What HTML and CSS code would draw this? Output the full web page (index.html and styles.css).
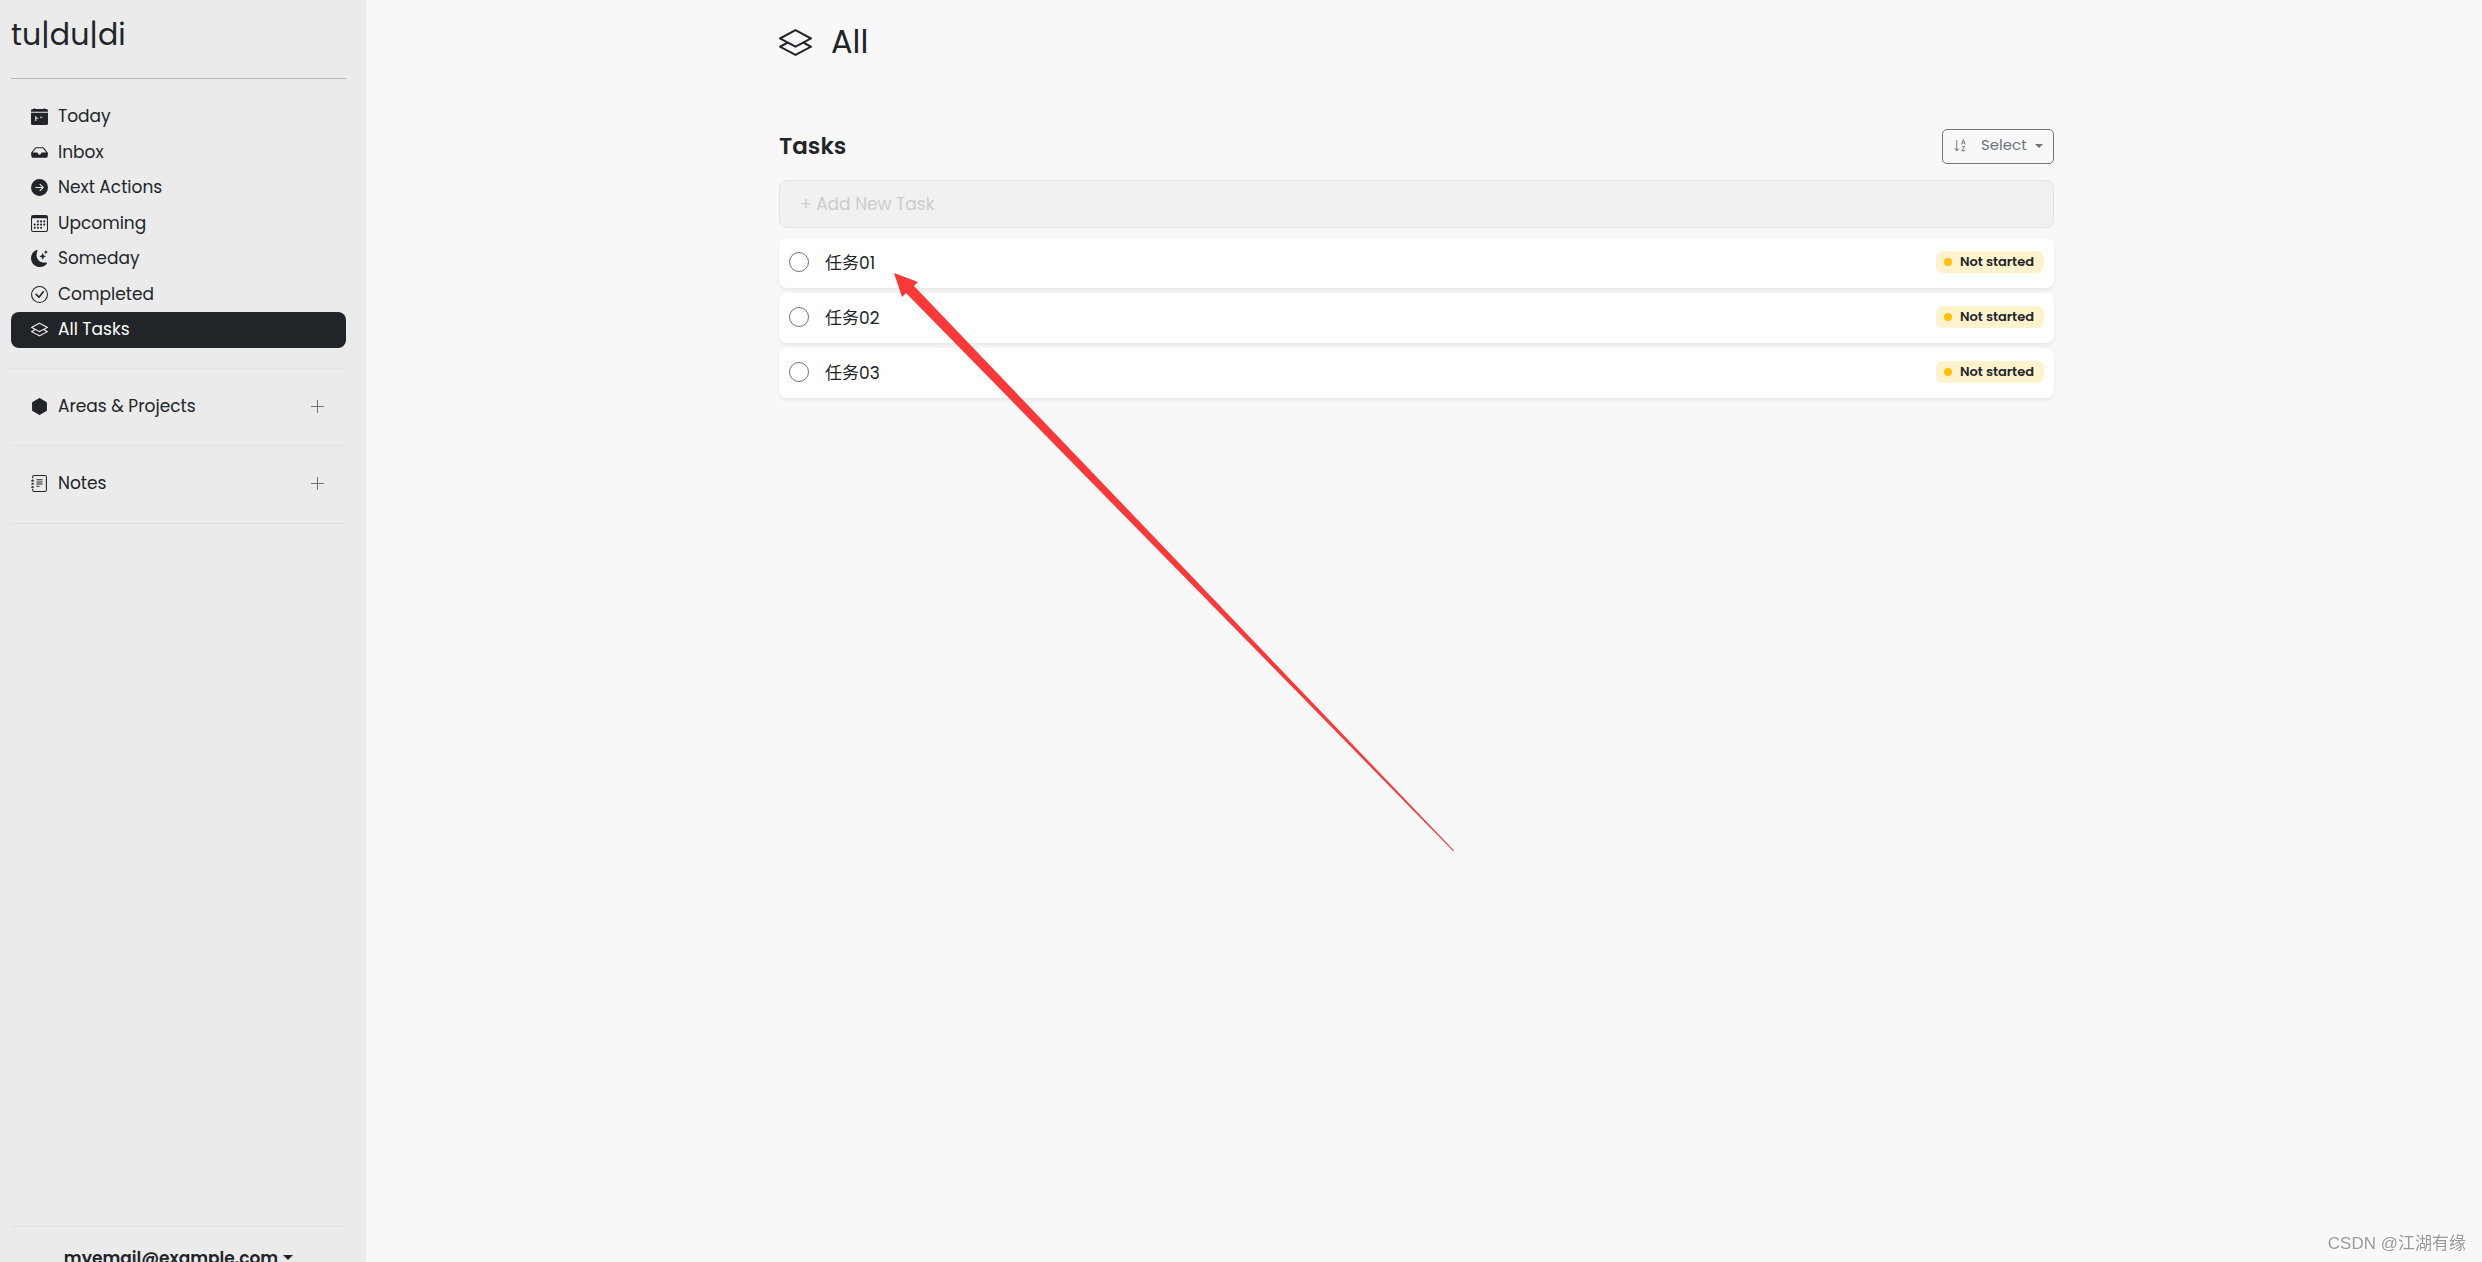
FILE: index.html
```html
<!DOCTYPE html>
<html lang="en">
<head>
    <meta charset="UTF-8">
    <meta name="viewport" content="width=device-width, initial-scale=1.0">
    <title>tu|du|di</title>
    <link rel="stylesheet" href="styles.css">
</head>
<body>

    <!-- shared icons -->
    <svg class="sprite" aria-hidden="true">
        <symbol id="layers" viewBox="0 0 16 16">
            <path d="M8.235 1.559a.5.5 0 0 0-.47 0l-7.5 4a.5.5 0 0 0 0 .882L3.188 8 .264 9.559a.5.5 0 0 0 0 .882l7.5 4a.5.5 0 0 0 .47 0l7.5-4a.5.5 0 0 0 0-.882L12.813 8l2.922-1.559a.5.5 0 0 0 0-.882zm3.515 7.008L14.438 10 8 13.433 1.562 10 4.25 8.567l3.515 1.874a.5.5 0 0 0 .47 0zM8 9.433 1.562 6 8 2.567 14.438 6z"/>
        </symbol>
        <symbol id="plus" viewBox="0 0 13 13">
            <path d="M6 0h1v6h6v1H7v6H6V7H0V6h6z"/>
        </symbol>
    </svg>

    <div class="app">
        <aside class="sidebar">
            <a class="logo" href="#">tu|du|di</a>

            <nav class="menu">
                <a class="menu-item" href="#">
                    <svg class="icon" viewBox="0 0 16 16"><path fill-rule="evenodd" d="M4 .5a.5.5 0 0 0-1 0V1H1.500a1.500 1.500 0 0 0-1.500 1.500V3.500h16V2.500A1.500 1.500 0 0 0 14.500 1H13V.5a.5.5 0 0 0-1 0V1H4zM0 4.500V14.500A1.500 1.500 0 0 0 1.500 16h13a1.500 1.500 0 0 0 1.500-1.500V4.500zM4 7.500h1v1.700h1.800v1H5v2H4zM8.600 8.200h2v1h-2z"/></svg>
                    Today
                </a>
                <a class="menu-item" href="#">
                    <svg class="icon" viewBox="0 0 16 16"><path d="M4.980 4a.5.5 0 0 0-.39.188L1.540 8H6a.5.5 0 0 1 .5.5 1.500 1.500 0 1 0 3 0A.5.5 0 0 1 10 8h4.460l-3.050-3.812A.5.5 0 0 0 11.020 4zm-1.170-.437A1.500 1.500 0 0 1 4.980 3h6.040a1.500 1.500 0 0 1 1.170.563l3.700 4.625a.5.5 0 0 1 .106.374l-.39 3.124A1.500 1.500 0 0 1 14.117 13H1.883a1.500 1.500 0 0 1-1.489-1.314l-.39-3.124a.5.5 0 0 1 .106-.374z"/></svg>
                    Inbox
                </a>
                <a class="menu-item" href="#">
                    <svg class="icon" viewBox="0 0 16 16"><path d="M8 0a8 8 0 1 1 0 16A8 8 0 0 1 8 0M4.500 7.500a.5.5 0 0 0 0 1h5.793l-2.147 2.146a.5.5 0 0 0 .708.708l3-3a.5.5 0 0 0 0-.708l-3-3a.5.5 0 1 0-.708.708L10.293 7.500z"/></svg>
                    Next Actions
                </a>
                <a class="menu-item" href="#">
                    <svg class="icon" viewBox="0 0 16 16"><path d="M14 0H2a2 2 0 0 0-2 2v12a2 2 0 0 0 2 2h12a2 2 0 0 0 2-2V2a2 2 0 0 0-2-2M1 3.857C1 3.384 1.448 3 2 3h12c.552 0 1 .384 1 .857v10.286c0 .473-.448.857-1 .857H2c-.552 0-1-.384-1-.857z"/><path d="M6.500 7a1 1 0 1 0 0-2 1 1 0 0 0 0 2m3 0a1 1 0 1 0 0-2 1 1 0 0 0 0 2m3 0a1 1 0 1 0 0-2 1 1 0 0 0 0 2m-9 3a1 1 0 1 0 0-2 1 1 0 0 0 0 2m3 0a1 1 0 1 0 0-2 1 1 0 0 0 0 2m3 0a1 1 0 1 0 0-2 1 1 0 0 0 0 2m3 0a1 1 0 1 0 0-2 1 1 0 0 0 0 2m-9 3a1 1 0 1 0 0-2 1 1 0 0 0 0 2m3 0a1 1 0 1 0 0-2 1 1 0 0 0 0 2m3 0a1 1 0 1 0 0-2 1 1 0 0 0 0 2"/></svg>
                    Upcoming
                </a>
                <a class="menu-item" href="#">
                    <svg class="icon" viewBox="0 0 16 16"><path d="M6 .278a.77.77 0 0 1 .08.858 7.200 7.200 0 0 0-.878 3.460c0 4.021 3.278 7.277 7.318 7.277q.792-.001 1.533-.160a.79.79 0 0 1 .810.316.73.73 0 0 1-.031.893A8.350 8.350 0 0 1 8.344 16C3.734 16 0 12.286 0 7.710 0 4.266 2.114 1.312 5.124.060A.75.75 0 0 1 6 .278"/><path d="M10.794 3.148a.217.217 0 0 1 .412 0l.387 1.162c.173.518.579.924 1.097 1.097l1.162.387a.217.217 0 0 1 0 .412l-1.162.387a1.730 1.730 0 0 0-1.097 1.097l-.387 1.162a.217.217 0 0 1-.412 0l-.387-1.162A1.730 1.730 0 0 0 9.310 6.593l-1.162-.387a.217.217 0 0 1 0-.412l1.162-.387a1.730 1.730 0 0 0 1.097-1.097zM13.863.099a.145.145 0 0 1 .274 0l.258.774c.115.346.386.617.732.732l.774.258a.145.145 0 0 1 0 .274l-.774.258a1.160 1.160 0 0 0-.732.732l-.258.774a.145.145 0 0 1-.274 0l-.258-.774a1.160 1.160 0 0 0-.732-.732l-.774-.258a.145.145 0 0 1 0-.274l.774-.258c.346-.115.617-.386.732-.732z"/></svg>
                    Someday
                </a>
                <a class="menu-item" href="#">
                    <svg class="icon" viewBox="0 0 16 16"><path d="M8 15A7 7 0 1 1 8 1a7 7 0 0 1 0 14m0 1A8 8 0 1 0 8 0a8 8 0 0 0 0 16"/><path d="m10.970 4.970-.020.022-3.473 4.425-2.093-2.094a.75.75 0 0 0-1.060 1.060L6.970 11.030a.75.75 0 0 0 1.079-.020l3.992-4.990a.75.75 0 0 0-1.071-1.050"/></svg>
                    Completed
                </a>
                <a class="menu-item active" href="#">
                    <svg class="icon"><use href="#layers"/></svg>
                    All Tasks
                </a>
            </nav>

            <div class="group">
                <a class="menu-item" href="#">
                    <svg class="icon" viewBox="0 0 16 16"><path d="M8.500.134a1 1 0 0 0-1 0l-6 3.577a1 1 0 0 0-.5.866v6.846a1 1 0 0 0 .5.866l6 3.577a1 1 0 0 0 1 0l6-3.577a1 1 0 0 0 .5-.866V4.577a1 1 0 0 0-.5-.866z"/></svg>
                    Areas &amp; Projects
                </a>
                <button class="add" type="button" aria-label="Add area"><svg><use href="#plus"/></svg></button>
            </div>
            <div class="group">
                <a class="menu-item" href="#">
                    <svg class="icon" viewBox="0 0 16 16"><path d="M5 10.500a.5.5 0 0 1 .5-.5h2a.5.5 0 0 1 0 1h-2a.5.5 0 0 1-.5-.5m0-2a.5.5 0 0 1 .5-.5h5a.5.5 0 0 1 0 1h-5a.5.5 0 0 1-.5-.5m0-2a.5.5 0 0 1 .5-.5h5a.5.5 0 0 1 0 1h-5a.5.5 0 0 1-.5-.5m0-2a.5.5 0 0 1 .5-.5h5a.5.5 0 0 1 0 1h-5a.5.5 0 0 1-.5-.5"/><path d="M3 0h10a2 2 0 0 1 2 2v12a2 2 0 0 1-2 2H3a2 2 0 0 1-2-2v-1h1v1a1 1 0 0 0 1 1h10a1 1 0 0 0 1-1V2a1 1 0 0 0-1-1H3a1 1 0 0 0-1 1v1H1V2a2 2 0 0 1 2-2"/><path d="M1 5v-.5a.5.5 0 0 1 1 0V5h.5a.5.5 0 0 1 0 1h-2a.5.5 0 0 1 0-1zm0 3v-.5a.5.5 0 0 1 1 0V8h.5a.5.5 0 0 1 0 1h-2a.5.5 0 0 1 0-1zm0 3v-.5a.5.5 0 0 1 1 0v.5h.5a.5.5 0 0 1 0 1h-2a.5.5 0 0 1 0-1z"/></svg>
                    Notes
                </a>
                <button class="add" type="button" aria-label="Add note"><svg><use href="#plus"/></svg></button>
            </div>

            <div class="account">
                <button class="account-toggle" type="button">myemail@example.com<span class="caret"></span></button>
            </div>
        </aside>

        <main class="content">
            <div class="page">
                <h1 class="page-title"><svg><use href="#layers"/></svg>All</h1>

                <div class="toolbar">
                    <h2>Tasks</h2>
                    <label class="sort">
                        <svg viewBox="0 0 16 16"><path fill-rule="evenodd" d="M10.082 5.629 9.664 7H8.598l1.789-5.332h1.234L13.402 7h-1.120l-.419-1.371zm1.570-.785L11 2.687h-.047l-.652 2.157z"/><path d="M12.960 14H9.028v-.691l2.579-3.720v-.054H9.098v-.867h3.785v.691l-2.567 3.720v.054h2.645zM4.500 2.500a.5.5 0 0 0-1 0v9.793l-1.146-1.147a.5.5 0 0 0-.708.708l2 1.999.007.007a.497.497 0 0 0 .7-.006l2-2a.5.5 0 0 0-.707-.708L4.500 12.293z"/></svg>
                        <select aria-label="Sort tasks">
                            <option>Select</option>
                        </select>
                        <span class="caret"></span>
                    </label>
                </div>

                <input class="new-task" type="text" placeholder="+ Add New Task" aria-label="Add New Task">

                <ul class="tasks">
                    <li class="task">
                        <input type="checkbox" id="task1">
                        <label for="task1">任务01</label>
                        <span class="badge">Not started</span>
                    </li>
                    <li class="task">
                        <input type="checkbox" id="task2">
                        <label for="task2">任务02</label>
                        <span class="badge">Not started</span>
                    </li>
                    <li class="task">
                        <input type="checkbox" id="task3">
                        <label for="task3">任务03</label>
                        <span class="badge">Not started</span>
                    </li>
                </ul>

                <!-- arrow pointing at the first task -->
                <svg class="arrow" viewBox="0 0 560 578" aria-hidden="true">
                    <path d="M0 0 24 9 20 13 560 577.500 559 578 12 20 8 24z"/>
                </svg>
            </div>
        </main>
    </div>

    <div class="watermark">CSDN @江湖有缘</div>

</body>
</html>
```
FILE: styles.css
```css
* {
    box-sizing: border-box;
}

body {
    margin: 0;
    background-color: #f8f8f8;
    color: #212529;
    font-family: Poppins, Inter, "Noto Sans CJK SC", sans-serif;
    font-size: 17px;
    line-height: 1.5;
}

a {
    color: inherit;
    text-decoration: none;
}

svg {
    fill: currentColor;
    flex: none;
}

button, input, select {
    font: inherit;
    color: inherit;
}

.sprite {
    display: none;
}

.app {
    display: flex;
    height: 100vh;
    overflow: hidden;
}

/* sidebar */
.sidebar {
    display: flex;
    flex-direction: column;
    flex: none;
    width: 366px;
    padding: 0 20px 0 11px;
    background-color: #ebebeb;
}

.logo {
    padding: 15px 0 23px;
    border-bottom: 1px solid #b5b6b7;
    font-size: 30px;
    line-height: 40px;
}

.menu {
    padding: 20px 0;
}

.menu-item {
    display: flex;
    align-items: center;
    gap: 10px;
    padding: 5px 20px;
    border-radius: 8px;
}

.menu-item.active {
    background-color: #212529;
    color: white;
}

.icon {
    width: 17px;
    height: 17px;
}

.group {
    display: flex;
    align-items: center;
    justify-content: space-between;
    padding: 20px 0 21px;
    border-top: 1px solid #dee2e6;
}

.group + .group {
    border-bottom: 1px solid #dee2e6;
}

.add {
    display: flex;
    margin-right: 22px;
    padding: 0;
    border: 0;
    background: none;
    color: #6c757d;
}

.add svg {
    width: 13px;
    height: 13px;
}

/* the account line hangs over the bottom edge */
.account {
    display: flex;
    justify-content: center;
    margin: auto 0 -28px;
    padding: 19px 0;
    border-top: 1px solid #dfe0e1;
}

.account-toggle {
    padding: 0;
    border: 0;
    background: none;
    font-weight: 600;
}

.caret {
    display: inline-block;
    margin-left: 5px;
    vertical-align: 4px;
    border-top: 5px solid;
    border-left: 5px solid transparent;
    border-right: 5px solid transparent;
}

/* content */
.content {
    flex: 1;
    padding-right: 15px;
}

.page {
    position: relative;
    max-width: 1275px;
    margin: 0 auto;
    padding-top: 22px;
}

.page-title {
    display: flex;
    align-items: center;
    gap: 19px;
    margin: 0 0 67px;
    font-size: 32px;
    font-weight: 400;
    line-height: 40px;
}

.page-title svg {
    width: 33px;
    height: 33px;
}

.toolbar {
    display: flex;
    align-items: center;
    justify-content: space-between;
    margin-bottom: 16px;
}

.toolbar h2 {
    margin: 0;
    padding-bottom: 2px;
    font-size: 23px;
    font-weight: 600;
    line-height: 26px;
}

.sort {
    display: flex;
    align-items: center;
    padding: 0 10px 2px;
    height: 35px;
    border: 1px solid #6c757d;
    border-radius: 5px;
    color: #6c757d;
    font-size: 15px;
}

.sort svg {
    width: 15px;
    height: 15px;
    margin-right: 13px;
}

.sort select {
    appearance: none;
    padding: 0;
    border: 0;
    background: none;
}

.sort .caret {
    margin-left: 8px;
    border-top-width: 4px;
    border-left-width: 4px;
    border-right-width: 4px;
}

.new-task {
    display: block;
    width: 100%;
    height: 48px;
    padding: 0 20px;
    border: 1px solid #dee2e6;
    border-radius: 8px;
    background-color: #f1f1f1;
}

.new-task::placeholder {
    color: #ccc;
}

.tasks {
    display: grid;
    gap: 5px;
    margin: 10px 0 0;
    padding: 0;
    list-style: none;
}

.task {
    display: flex;
    align-items: center;
    height: 50px;
    padding: 0 10px 2px;
    border-radius: 8px;
    background-color: white;
    box-shadow: 0 2px 4px rgba(0, 0, 0, .075);
}

.task input {
    appearance: none;
    width: 20px;
    height: 20px;
    margin: 0 16px 0 0;
    border: 1px solid #6c757d;
    border-radius: 50%;
}

.task label {
    padding-top: 4px;
}

.badge {
    display: flex;
    align-items: center;
    gap: 8px;
    margin-left: auto;
    padding: 0 10px 0 8px;
    border-radius: 7px;
    background-color: #fff3cd;
    font-size: 13px;
    font-weight: 600;
    line-height: 22px;
}

.badge::before {
    content: "";
    width: 8px;
    height: 8px;
    border-radius: 50%;
    background-color: #ffc107;
}

.arrow {
    position: absolute;
    top: 273px;
    left: 115px;
    width: 560px;
    height: 578px;
    fill: #fc3838;
}

.watermark {
    position: fixed;
    right: 16px;
    bottom: 6px;
    color: #999;
    font-family: "Liberation Sans", "Noto Sans CJK SC", sans-serif;
    font-size: 17px;
    text-shadow: 1px 1px 0 white;
}
```
